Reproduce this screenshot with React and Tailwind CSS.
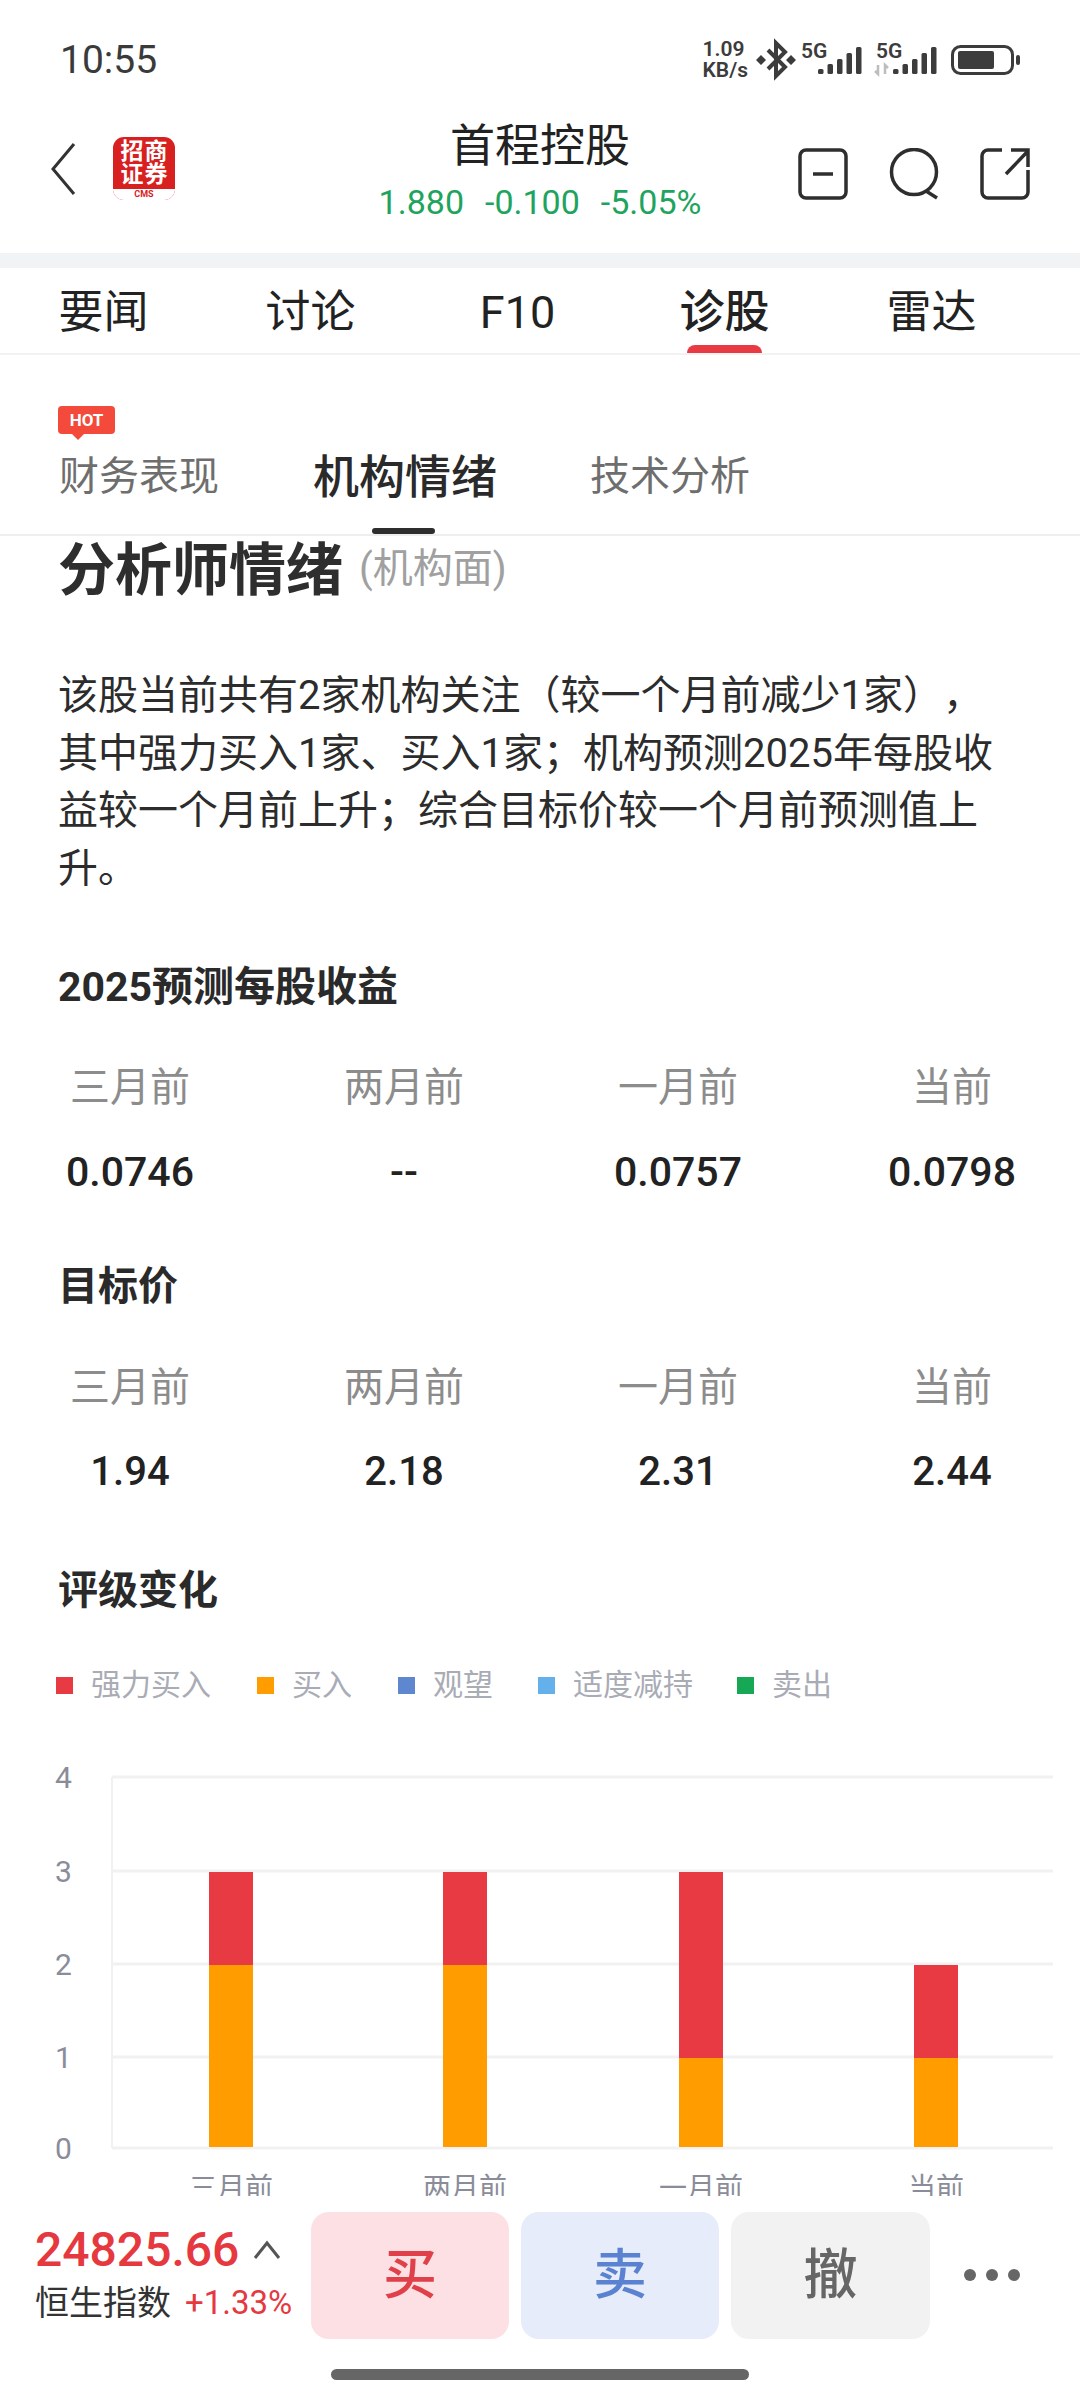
import React from "react";

const topTabs = [
    { label: "要闻" },
    { label: "讨论" },
    { label: "F10" },
    { label: "诊股", active: true },
    { label: "雷达" },
];

const legend = [
    { label: "强力买入", color: "bg-[#e83a42]", gap: "mr-[46px]" },
    { label: "买入", color: "bg-[#ff9c00]", gap: "mr-[46px]" },
    { label: "观望", color: "bg-[#5f87d0]", gap: "mr-[45px]" },
    { label: "适度减持", color: "bg-[#64b0ea]", gap: "mr-[44px]" },
    { label: "卖出", color: "bg-[#16a854]", gap: "" },
];

const bars = [
    { x: 209, label: "三月前", buy: 2 },
    { x: 443, label: "两月前", buy: 2 },
    { x: 679, label: "一月前", buy: 1 },
    { x: 914, label: "当前", buy: 1, top: 2 },
];

const gridY = [17, 111, 204, 297, 388];

const StatRow = ({ values, size }) => {
    const labels = ["三月前", "两月前", "一月前", "当前"];
    return (
        <>
            <div className="flex justify-between w-[962px] ml-[2px] mt-[45px]">
                {labels.map((l) => (
                    <div key={l} className="w-[140px] text-center h-[56px] leading-[56px] text-[40px] text-[#8c8c8c]">{l}</div>
                ))}
            </div>
            <div className="flex justify-between w-[962px] ml-[2px] mt-[28px]">
                {values.map((v, i) => (
                    <div key={i} className={`w-[140px] text-center h-[56px] leading-[56px] font-medium text-[#222] ${size}`}>{v}</div>
                ))}
            </div>
        </>
    );
};

const Chart = () => (
    <svg width="1080" height="450" className="block mt-[55px] -ml-[58px]">
        <line x1="112" y1="17" x2="112" y2="388" stroke="#f1f1f3" strokeWidth="2" />
        {gridY.map((y) => (
            <line key={y} x1="112" y1={y} x2="1053" y2={y} stroke="#f1f1f3" strokeWidth="3" />
        ))}
        {["4", "3", "2", "1", "0"].map((t, i) => (
            <text key={t} x="55" y={gridY[i] + 11} fontSize="30" fill="#8a8d99">{t}</text>
        ))}
        {bars.map((b) => {
            const base = 387;
            const total = b.top || 3;
            const yTop = gridY[4 - total] + 1;
            const yBuy = gridY[4 - b.buy] + 1;
            return (
                <g key={b.label}>
                    <rect x={b.x} y={yTop} width="44" height={yBuy - yTop} fill="#e83a42" />
                    <rect x={b.x} y={yBuy} width="44" height={base - yBuy} fill="#ff9c00" />
                    <text x={b.x + 22} y="438" fontSize="28" fill="#8a8d99" textAnchor="middle">{b.label}</text>
                </g>
            );
        })}
    </svg>
);

const StatusIcons = () => (
    <svg width="272" height="50" viewBox="750 35 272 50" className="block">
        <path d="M768 50 L785 67 L776 76 L776 43 L785 52 L768 69" fill="none" stroke="#3c3c3c" strokeWidth="4" />
        <path d="M761 55 l5 5 l-5 5 l-5 -5 z M791 55 l5 5 l-5 5 l-5 -5 z" fill="#3c3c3c" />
        <text x="801" y="58" fontSize="21" fontWeight="600" fill="#3c3c3c">5G</text>
        {[0, 1, 2, 3, 4].map((i) => (
            <rect key={i} x={818 + i * 9.5} y={74 - [5, 10, 15, 21, 27][i]} width="5.5" height={[5, 10, 15, 21, 27][i]} rx="1.5" fill="#3c3c3c" />
        ))}
        <text x="876" y="58" fontSize="21" fontWeight="600" fill="#3c3c3c">5G</text>
        <path d="M878 65 v9 l-3 -3 M885 74 v-9 l3 3" fill="none" stroke="#bdbdbd" strokeWidth="2.5" />
        {[0, 1, 2, 3, 4].map((i) => (
            <rect key={i} x={893 + i * 9.5} y={74 - [5, 10, 15, 21, 27][i]} width="5.5" height={[5, 10, 15, 21, 27][i]} rx="1.5" fill="#3c3c3c" />
        ))}
        <rect x="952.5" y="46.5" width="60" height="27" rx="8" fill="none" stroke="#3c3c3c" strokeWidth="3" />
        <rect x="958" y="51" width="36" height="18" rx="2" fill="#3c3c3c" />
        <rect x="1016" y="55" width="4" height="10" rx="2" fill="#3c3c3c" />
    </svg>
);

const HeaderIcons = () => (
    <div className="flex items-center justify-end gap-[41px] pr-[50px]">
        <svg width="50" height="52" viewBox="0 0 50 52" fill="none" stroke="#2e2e2e" strokeWidth="3.5">
            <rect x="2" y="2" width="46" height="48" rx="6" />
            <path d="M15 26 H35" />
        </svg>
        <svg width="50" height="52" viewBox="0 0 50 52" fill="none" stroke="#2e2e2e" strokeWidth="3.5">
            <circle cx="25" cy="24" r="22.5" />
            <path d="M37 43 L48 50" />
        </svg>
        <svg width="50" height="52" viewBox="0 0 50 52" fill="none" stroke="#2e2e2e" strokeWidth="3.5">
            <path d="M22 2 H8 a6 6 0 0 0 -6 6 V44 a6 6 0 0 0 6 6 H42 a6 6 0 0 0 6 -6 V22" />
            <path d="M26 26 L48 3 M31 2 H48 V19" />
        </svg>
    </div>
);

const Logo = () => (
    <div className="w-[62px] h-[63px] rounded-[11px] overflow-hidden flex flex-col bg-[#d7201f]">
        <div className="h-[52px] grid grid-cols-2 content-start px-[7px] pt-[3px] text-white text-[23px] leading-[23px] font-bold text-center">
            <span>招</span><span>商</span><span>证</span><span>券</span>
        </div>
        <div className="flex-1 bg-white text-center text-[#d7201f] text-[9px] leading-[11px] font-bold">CMS</div>
    </div>
);

const App = () => {
    return (
        <div className="w-[1080px] h-[2400px] bg-white flex flex-col overflow-hidden [font-family:Roboto,'Noto_Sans_CJK_SC',sans-serif] text-[#222]">
            {/* status bar */}
            <div className="h-[100px] shrink-0 flex items-center justify-between pl-[60px] pr-[60px] pt-[20px]">
                <div className="text-[39px] text-[#3a3a3a] leading-[40px]">10:55</div>
                <div className="flex items-center gap-[2px] -mr-[2px]">
                    <div className="text-[21px] leading-[21px] font-semibold text-[#3c3c3c]">
                        <div>1.09</div>
                        <div>KB/s</div>
                    </div>
                    <StatusIcons />
                </div>
            </div>

            {/* stock header */}
            <div className="h-[153px] shrink-0 grid grid-cols-[1fr_auto_1fr] items-start">
                <div className="flex items-center pl-[50px] pt-[37px]">
                    <svg width="26" height="52" viewBox="0 0 26 52" fill="none" stroke="#333" strokeWidth="3">
                        <path d="M24 1 L3 26 L24 51" />
                    </svg>
                    <div className="ml-[37px]"><Logo /></div>
                </div>
                <div className="text-center">
                    <div className="text-[45px] leading-[60px] mt-[17px] text-[#222]">首程控股</div>
                    <div className="text-[34px] leading-[40px] mt-[5px] text-[#1ea45e] flex gap-[21px]">
                        <span>1.880</span><span>-0.100</span><span>-5.05%</span>
                    </div>
                </div>
                <div className="pt-[48px]"><HeaderIcons /></div>
            </div>
            <div className="h-[15px] shrink-0 bg-[#f2f3f5]" />

            {/* main tabs */}
            <div className="h-[87px] shrink-0 border-b-2 border-[#f2f2f2] flex">
                {topTabs.map((t) => (
                    <div key={t.label} className={`relative w-[207px] whitespace-nowrap text-center h-[85px] pt-[15px] text-[45px] leading-[60px] ${t.active ? "font-medium" : ""}`}>
                        {t.label}
                        {t.active && <div className="absolute left-[66px] bottom-0 w-[75px] h-[8px] rounded-t-full rounded-b-sm bg-[#e83a42]" />}
                    </div>
                ))}
            </div>

            {/* sub tabs */}
            <div className="h-[181px] shrink-0 border-b-2 border-[#efefef] flex items-start pl-[59px] relative">
                <div className="absolute left-[58px] top-[51px] w-[57px] h-[28px] rounded-[4px] bg-[#f44a3c] text-white text-[17px] leading-[28px] font-bold text-center">
                    HOT
                    <div className="absolute left-[14px] -bottom-[6px] w-0 h-0 border-x-[6px] border-x-transparent border-t-[6px] border-t-[#f44a3c]" />
                </div>
                <div className="text-[40px] leading-[56px] mt-[94px] text-[#6e6e6e]">财务表现</div>
                <div className="relative text-[46px] leading-[60px] mt-[92px] ml-[94px] font-medium text-[#2a2a2a]">
                    机构情绪
                    <div className="absolute left-[59px] top-[81px] w-[63px] h-[6px] rounded-full bg-[#2e2e2e]" />
                </div>
                <div className="text-[40px] leading-[56px] mt-[94px] ml-[93px] text-[#6e6e6e]">技术分析</div>
            </div>

            {/* content, clipped by the bottom bar */}
            <div className="flex-1 min-h-0 overflow-hidden pl-[58px]">
                <div className="flex items-center h-[62px] mt-[4px] -mb-[4px]">
                    <span className="text-[57px] leading-[62px] font-bold text-[#2e2e2e]">分析师情绪</span>
                    <span className="text-[40px] leading-[62px] ml-[16px] -mt-[4px] text-[#a0a0a0]">(机构面)</span>
                </div>
                <p className="mt-[69px] text-[40px] leading-[57.5px] text-[#2c2c2c] [text-spacing-trim:space-all]">
                    该股当前共有2家机构关注（较一个月前减少1家），<br />
                    其中强力买入1家、买入1家；机构预测2025年每股收<br />
                    益较一个月前上升；综合目标价较一个月前预测值上<br />
                    升。
                </p>

                <div className="mt-[62px] h-[56px] leading-[56px] text-[41px] font-bold text-[#2a2a2a]">2025预测每股收益</div>
                <StatRow values={["0.0746", "--", "0.0757", "0.0798"]} size="text-[41px]" />

                <div className="mt-[59px] h-[56px] leading-[56px] text-[40px] font-bold text-[#2a2a2a]">目标价</div>
                <StatRow values={["1.94", "2.18", "2.31", "2.44"]} size="text-[40px]" />

                <div className="mt-[63px] h-[56px] leading-[56px] text-[40px] font-bold text-[#2a2a2a]">评级变化</div>

                <div className="mt-[46px] h-[40px] flex items-center -ml-[2px]">
                    {legend.map((l) => (
                        <div key={l.label} className={`flex items-center ${l.gap}`}>
                            <span className={`w-[17px] h-[17px] ${l.color}`} />
                            <span className="ml-[18px] text-[30px] leading-[40px] text-[#a9abb5]">{l.label}</span>
                        </div>
                    ))}
                </div>

                <Chart />
            </div>

            {/* bottom bar */}
            <div className="h-[204px] shrink-0 bg-white">
                <div className="flex items-start h-[143px] pt-[16px]">
                    <div className="w-[311px] shrink-0 pl-[35px]">
                        <div className="flex items-center h-[60px] mt-[8px]">
                            <span className="text-[48px] leading-[60px] font-medium text-[#e5393f]">24825.66</span>
                            <svg width="28" height="20" viewBox="0 0 28 20" fill="none" stroke="#555" strokeWidth="3" className="ml-[14px]">
                                <path d="M2 18 L14 3 L26 18" />
                            </svg>
                        </div>
                        <div className="flex items-center h-[48px] -mt-[1px]">
                            <span className="text-[34px] leading-[48px] text-[#333]">恒生指数</span>
                            <span className="text-[33px] leading-[48px] ml-[14px] text-[#e5393f]">+1.33%</span>
                        </div>
                    </div>
                    <div className="flex gap-[12px]">
                        <div className="w-[198px] h-[127px] rounded-[18px] bg-[#fde0e3] flex items-center justify-center text-[54px] font-medium text-[#e0404a]">买</div>
                        <div className="w-[198px] h-[127px] rounded-[18px] bg-[#e6ecf9] flex items-center justify-center text-[54px] font-medium text-[#5a82d0]">卖</div>
                        <div className="w-[199px] h-[127px] rounded-[18px] bg-[#f2f2f2] flex items-center justify-center text-[54px] font-medium text-[#666]">撤</div>
                    </div>
                    <div className="flex gap-[10px] ml-[34px] mt-[57px]">
                        <span className="w-[12px] h-[12px] rounded-full bg-[#666]" />
                        <span className="w-[12px] h-[12px] rounded-full bg-[#666]" />
                        <span className="w-[12px] h-[12px] rounded-full bg-[#666]" />
                    </div>
                </div>
                <div className="w-[418px] h-[11px] mx-auto mt-[30px] rounded-full bg-[#666]" />
            </div>
        </div>
    );
};

export default App;
